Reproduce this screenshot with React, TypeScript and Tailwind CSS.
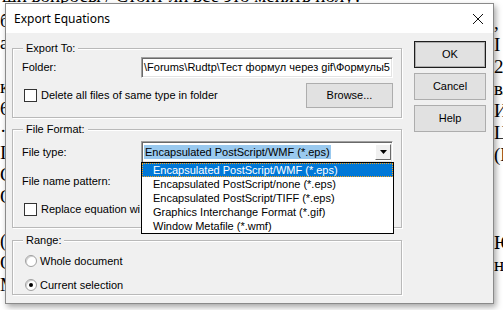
import React from "react";

const serif = { fontFamily: '"Liberation Serif", "Times New Roman", serif' };

const leftLines = ["б", "а", "", "к", "6", "·", "I", "С", "О", "", "(", "О", "М"];
const rightLines = [",", "I", "2", "вл", "И", "Ц", "(В", "", "", "", "Ю", "на", ""];

function Checkbox() {
  return <div className="w-[13px] h-[13px] bg-white border border-[#333333] shrink-0" />;
}

function Radio({ checked }: { checked?: boolean }) {
  return (
    <div className="w-[12px] h-[12px] rounded-full bg-white border border-[#a0a0a0] shadow-[inset_1px_1px_0_#d0d0d0] flex items-center justify-center shrink-0">
      {checked && <div className="w-[4px] h-[4px] rounded-full bg-black" />}
    </div>
  );
}

function Btn({ children, def }: { children: React.ReactNode; def?: boolean }) {
  return (
    <div
      className={
        "w-[72px] h-[27px] flex items-center justify-center bg-[#e1e1e1] text-black " +
        (def ? "border border-[#1e1e1e] shadow-[inset_0_0_0_1px_#adadad]" : "border border-[#adadad]")
      }
    >
      {children}
    </div>
  );
}

function Group({ label, className, children }: { label: string; className: string; children: React.ReactNode }) {
  return (
    <div className={"relative border border-[#b9b9b9] shadow-[1px_1px_0_#ffffff,inset_1px_1px_0_#ffffff] " + className}>
      <span className="absolute left-[10px] top-[-8px] px-[3px] bg-[#f0f0f0] leading-[14px]">{label}</span>
      {children}
    </div>
  );
}

const sunken =
  "border-t border-l border-t-[#a0a0a0] border-l-[#a0a0a0] border-b border-r border-b-white border-r-white shadow-[inset_1px_1px_0_#696969,inset_-1px_-1px_0_#e3e3e3]";

export default function App() {
  return (
    <div className="relative w-[503px] h-[310px] overflow-hidden bg-white flex flex-col" style={serif}>
      {/* background page strips */}
      <div className="h-[4px] overflow-hidden shrink-0">
        <div className="mt-[-15px] text-[19px] leading-[22px] whitespace-nowrap pl-[2px]">
          ши вопросы / Стоит ли все это менять полу?
        </div>
      </div>
      <div className="flex flex-1 min-h-0">
        <div className="w-[5px] overflow-hidden flex flex-col pt-[6px]">
          {leftLines.map((t, i) => (
            <div key={i} className="h-[22px] text-[19px] leading-[22px] whitespace-nowrap">
              {t}
            </div>
          ))}
        </div>
        <div className="flex-1" />
        <div className="w-[10px] overflow-hidden flex flex-col pt-[8px]">
          {rightLines.map((t, i) => (
            <div key={i} className="h-[22px] text-[19px] leading-[22px] whitespace-nowrap pl-[1px]">
              {t}
            </div>
          ))}
        </div>
      </div>

      <div
        className="absolute left-[5px] top-[3px] w-[489px] h-[301px] bg-[#f0f0f0] border border-[#8a8a8a] shadow-[2px_3px_6px_rgba(0,0,0,0.35)] flex flex-col text-[11px] text-black"
        style={{ fontFamily: '"Liberation Sans", Arial, sans-serif' }}
      >
        {/* title bar */}
        <div className="h-[29px] bg-white flex items-center justify-between pl-[8px] pr-[9px] shrink-0">
          <span className="text-[12px] text-black" style={{ fontFamily: '"Noto Sans", sans-serif' }}>
            Export Equations
          </span>
          <svg width="12" height="12" viewBox="0 0 12 12" className="mt-[1px]">
            <path d="M1 1 L11 11 M11 1 L1 11" stroke="#111" strokeWidth="1" />
          </svg>
        </div>

        <div className="flex pl-[6px] pr-[7px]">
          {/* left */}
          <div className="w-[391px] flex flex-col pt-[15px]">
            <Group label="Export To:" className="h-[70px] flex flex-col pt-[8px] pl-[9px] pr-[8px]">
              <div className="flex items-center justify-between h-[21px]">
                <span>Folder:</span>
                <div className={"w-[252px] h-[21px] bg-white flex items-center overflow-hidden whitespace-nowrap pl-[2px] " + sunken}>
                  \Forums\Rudtp\Тест формул через gif\Формулы5
                </div>
              </div>
              <div className="flex items-center justify-between mt-[5px] h-[25px]">
                <div className="flex items-center gap-[4px] pl-[2px]">
                  <Checkbox />
                  <span>Delete all files of same type in folder</span>
                </div>
                <div className="w-[87px] h-[25px] bg-[#e1e1e1] border border-[#adadad] flex items-center justify-center">
                  Browse...
                </div>
              </div>
            </Group>

            <Group label="File Format:" className="h-[99px] mt-[11px] flex flex-col pt-[11px] pl-[9px] pr-[8px]">
              <div className="flex items-center justify-between h-[22px]">
                <span>File type:</span>
                <div className="relative">
                  <div className={"w-[252px] h-[22px] bg-white flex items-center pl-[2px] " + sunken}>
                    <span className="flex-1 flex items-center">
                      <span className="bg-[#99c9ef] px-[1px] leading-[14px] whitespace-nowrap">
                        Encapsulated PostScript/WMF (*.eps)
                      </span>
                    </span>
                    <div className="w-[16px] h-[16px] mr-[1px] bg-[#f0f0f0] border border-t-white border-l-white border-b-[#696969] border-r-[#696969] flex items-center justify-center">
                      <svg width="7" height="4" viewBox="0 0 7 4">
                        <path d="M0 0 H7 L3.5 4 Z" fill="#000" />
                      </svg>
                    </div>
                  </div>
                  <div className="absolute left-0 top-[21px] w-[253px] bg-white border border-black z-10 flex flex-col">
                    <div className="h-[14px] bg-[#0078d7] text-white border border-dotted border-[#f7a21b] flex items-center pl-[10px] whitespace-nowrap">
                      Encapsulated PostScript/WMF (*.eps)
                    </div>
                    {[
                      "Encapsulated PostScript/none (*.eps)",
                      "Encapsulated PostScript/TIFF (*.eps)",
                      "Graphics Interchange Format (*.gif)",
                      "Window Metafile (*.wmf)",
                    ].map((t) => (
                      <div key={t} className="h-[14px] flex items-center pl-[11px] whitespace-nowrap">
                        {t}
                      </div>
                    ))}
                  </div>
                </div>
              </div>
              <div className="h-[14px] flex items-center mt-[11px]">File name pattern:</div>
              <div className="flex items-center gap-[4px] pl-[2px] mt-[13px] w-[118px] overflow-hidden">
                <Checkbox />
                <span className="whitespace-nowrap">Replace equation wit</span>
              </div>
            </Group>

            <Group label="Range:" className="h-[55px] mt-[12px] flex flex-col pt-[13px] pl-[12px]">
              <div className="flex items-center gap-[3px] h-[14px]">
                <Radio />
                <span>Whole document</span>
              </div>
              <div className="flex items-center gap-[3px] h-[14px] mt-[10px]">
                <Radio checked />
                <span>Current selection</span>
              </div>
            </Group>
          </div>

          {/* right buttons */}
          <div className="flex flex-col gap-[5px] pt-[8px] ml-[12px]">
            <Btn def>OK</Btn>
            <Btn>Cancel</Btn>
            <Btn>Help</Btn>
          </div>
        </div>
      </div>
    </div>
  );
}
